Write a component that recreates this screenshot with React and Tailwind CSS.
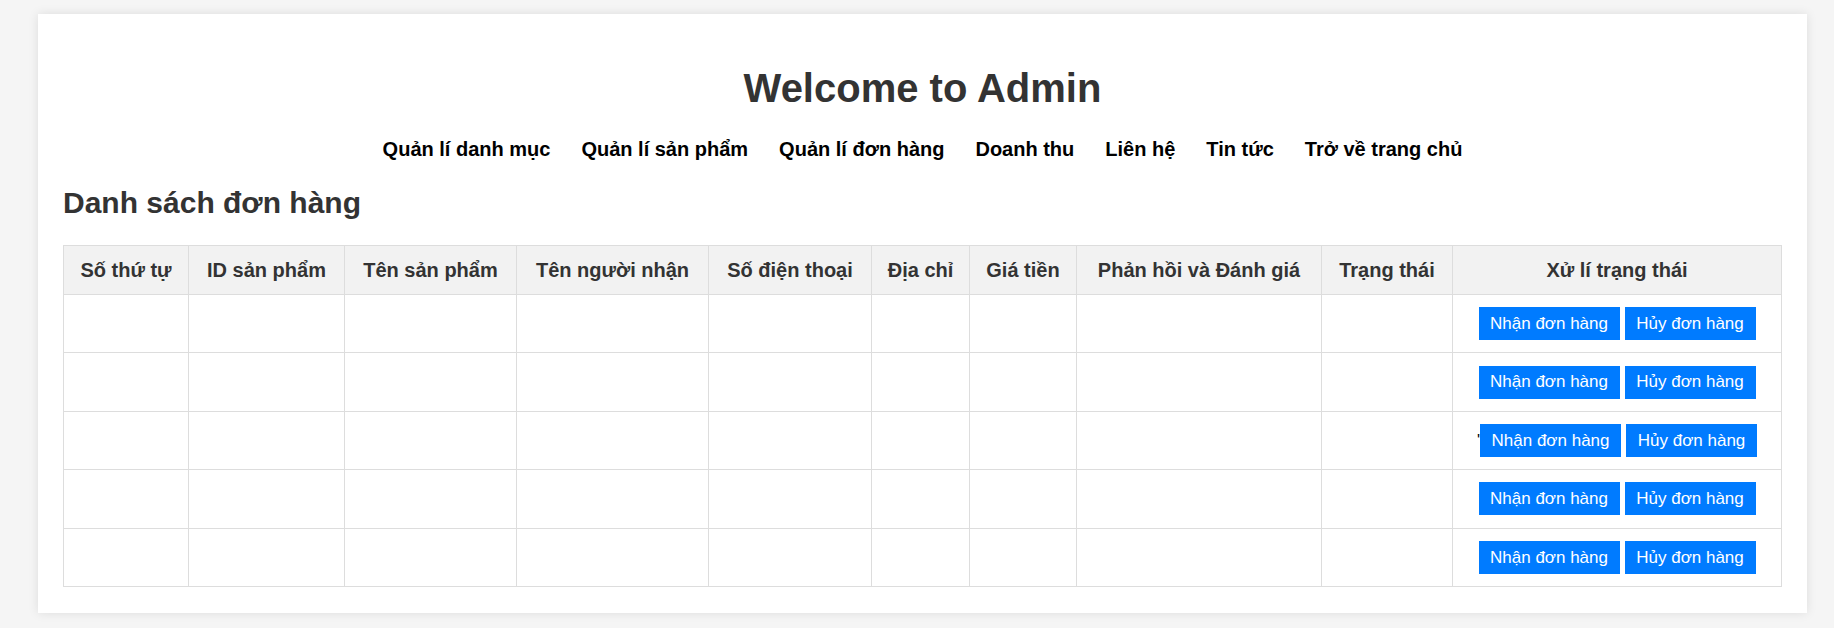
// Admin orders page
const navLinks = [
  "Quản lí danh mục",
  "Quản lí sản phẩm",
  "Quản lí đơn hàng",
  "Doanh thu",
  "Liên hệ",
  "Tin tức",
  "Trở về trang chủ",
];

const columns = [
  { title: "Số thứ tự", width: "w-[125px]" },
  { title: "ID sản phẩm", width: "w-[156px]" },
  { title: "Tên sản phẩm", width: "w-[172px]" },
  { title: "Tên người nhận", width: "w-[192px]" },
  { title: "Số điện thoại", width: "w-[163px]" },
  { title: "Địa chỉ", width: "w-[98px]" },
  { title: "Giá tiền", width: "w-[107px]" },
  { title: "Phản hồi và Đánh giá", width: "w-[245px]" },
  { title: "Trạng thái", width: "w-[131px]" },
  { title: "Xử lí trạng thái", width: "" },
];

// the third row has a stray quote before its buttons, as in the original
const orders = [{ id: 1 }, { id: 2 }, { id: 3, stray: true }, { id: 4 }, { id: 5 }];

function ActionButtons({ stray }) {
  return (
    <div className="flex items-center justify-center gap-[5px]">
      <div className="flex items-baseline">
        {stray && <span className="text-[16px] text-black">'</span>}
        <button className="flex h-[33px] w-[141px] items-center justify-center bg-[#007bff] text-[17px] text-white">
          Nhận đơn hàng
        </button>
      </div>
      <button className="flex h-[33px] w-[131px] items-center justify-center bg-[#007bff] text-[17px] text-white">
        Hủy đơn hàng
      </button>
    </div>
  );
}

export default function App() {
  return (
    <main className="min-h-screen bg-[#f5f5f5] pt-[14px] pb-[20px] font-['Liberation_Sans',Arial,sans-serif]">
      <div className="ml-[38px] w-[1769px] bg-white px-[25px] pt-[51px] pb-[26px] shadow-[0_0_10px_rgba(0,0,0,0.1)]">
        {/* Header */}
        <h1 className="text-center text-[40px] leading-[46px] font-bold text-[#333]">
          Welcome to Admin
        </h1>

        <nav className="mt-[26px] flex justify-center gap-[31px]">
          {navLinks.map((link) => (
            <a key={link} href="#" className="text-[20px] leading-[24px] font-bold text-black">
              {link}
            </a>
          ))}
        </nav>

        <h2 className="mt-[24px] text-[30px] leading-[36px] font-bold text-[#333]">
          Danh sách đơn hàng
        </h2>

        {/* Orders table */}
        <table className="mt-[24px] w-full table-fixed border-collapse">
          <colgroup>
            {columns.map((col) => (
              <col key={col.title} className={col.width} />
            ))}
          </colgroup>
          <thead>
            <tr className="h-[49px] bg-[#f2f2f2]">
              {columns.map((col) => (
                <th
                  key={col.title}
                  className="border border-[#ddd] p-0 text-center align-middle text-[20px] leading-[24px] font-bold whitespace-nowrap text-[#333]"
                >
                  {col.title}
                </th>
              ))}
            </tr>
          </thead>
          <tbody>
            {orders.map((order) => (
              <tr key={order.id} className="h-[58.4px]">
                {columns.slice(0, 9).map((col) => (
                  <td key={col.title} className="border border-[#ddd] p-0" />
                ))}
                <td className="border border-[#ddd] p-0 align-middle">
                  <ActionButtons stray={order.stray} />
                </td>
              </tr>
            ))}
          </tbody>
        </table>
      </div>
    </main>
  );
}
